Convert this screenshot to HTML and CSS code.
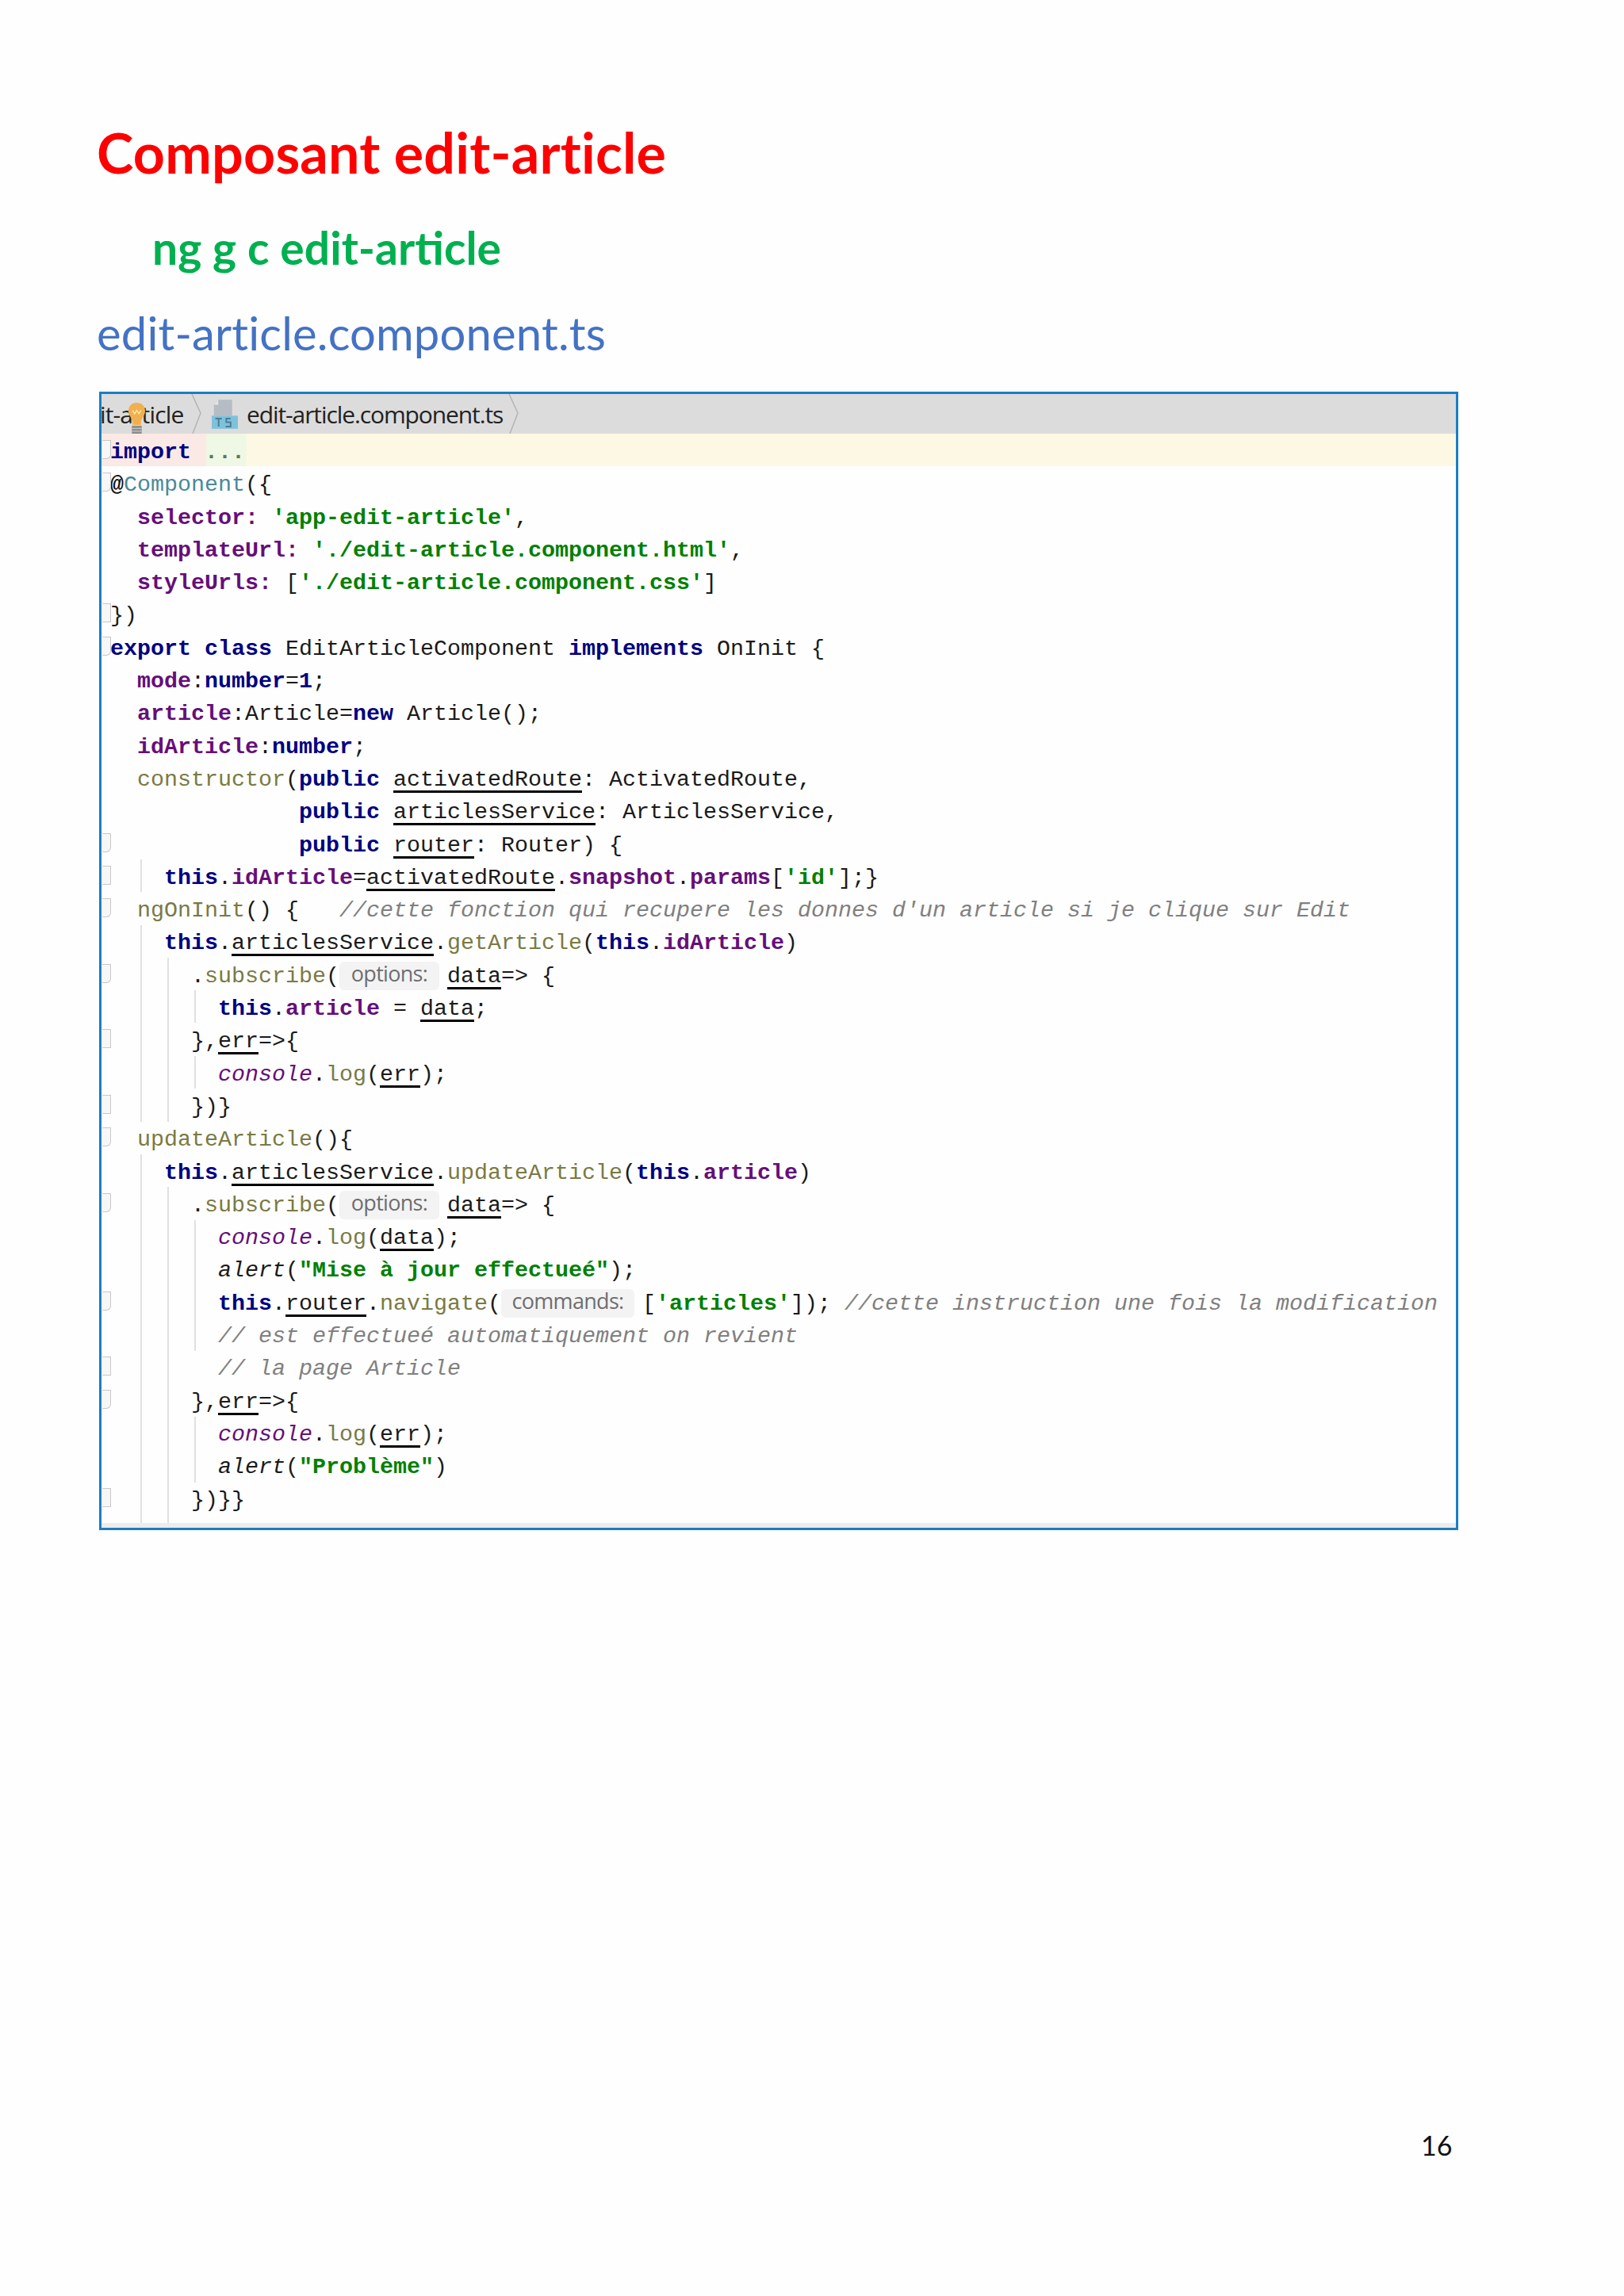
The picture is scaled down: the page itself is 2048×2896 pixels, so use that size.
FILE: index.html
```html
<!DOCTYPE html>
<html lang="fr">
<head>
<meta charset="utf-8">
<title>Composant edit-article</title>
<link rel="stylesheet" href="styles.css">
</head>
<body>
<main class="page">
  <h1 class="title">Composant edit-article</h1>
  <h2 class="command">ng g c edit-article</h2>
  <h3 class="file">edit-article.component.ts</h3>
  <section class="editor">
    <div class="crumbs">
      <span class="crumb-cut">it-article</span>
      <svg class="chev" viewBox="0 0 14 50"><path d="M1 0 L12 24 L2 50" fill="none" stroke="#b4b4b4" stroke-width="1.5"/></svg>
      <svg class="ts" viewBox="0 0 36 40">
        <path d="M9 0H28V22H3V7Z" fill="#b5bcc4"/><path d="M9 0V7H3Z" fill="#e4e4e4"/>
        <rect x="0" y="22" width="36" height="18" fill="#7fc1dc"/>
        <path d="M5 26H14M9.500 26V37M26 26H20V31H26V37H19" fill="none" stroke="#4c7f92" stroke-width="2.200"/>
      </svg>
      <span class="crumb">edit-article.component.ts</span>
      <svg class="chev" viewBox="0 0 14 50"><path d="M1 0 L12 24 L2 50" fill="none" stroke="#b4b4b4" stroke-width="1.5"/></svg>
      <svg class="bulb" viewBox="0 0 26 50">
        <path d="M13 1C5 1 1 7 1 13C1 20 7 23 7 30V33H19V30C19 23 25 20 25 13C25 7 21 1 13 1Z" fill="#f0b050"/>
        <path d="M7 12L10 17L13 12L16 17L19 12" fill="none" stroke="#ffe9a8" stroke-width="1.500"/>
        <path d="M6 34H20V46H17L15 49H11L9 46H6Z" fill="#8c8c8c"/>
        <path d="M6 38H20M6 42H20" stroke="#c4c4c4" stroke-width="1.500"/>
      </svg>
    </div>
    <div class="code">
<div class="line hl"><i class="fold fold-open"></i><b class="kw">import</b> <span class="dots">...</span></div>
<div class="line"><i class="fold fold-open"></i><span class="plain">@</span><span class="deco">Component</span>({</div>
<div class="line">  <b class="mem">selector:</b> <b class="str">'app-edit-article'</b>,</div>
<div class="line">  <b class="mem">templateUrl:</b> <b class="str">'./edit-article.component.html'</b>,</div>
<div class="line">  <b class="mem">styleUrls:</b> [<b class="str">'./edit-article.component.css'</b>]</div>
<div class="line"><i class="fold"></i>})</div>
<div class="line"><i class="fold fold-open"></i><b class="kw">export class</b> EditArticleComponent <b class="kw">implements</b> OnInit {</div>
<div class="line">  <b class="mem">mode</b>:<b class="kw">number</b>=<b class="kw">1</b>;</div>
<div class="line">  <b class="mem">article</b>:Article=<b class="kw">new</b> Article();</div>
<div class="line">  <b class="mem">idArticle</b>:<b class="kw">number</b>;</div>
<div class="line">  <span class="fn">constructor</span>(<b class="kw">public</b> <u>activatedRoute</u>: ActivatedRoute,</div>
<div class="line">              <b class="kw">public</b> <u>articlesService</u>: ArticlesService,</div>
<div class="line"><i class="fold fold-open"></i>              <b class="kw">public</b> <u>router</u>: Router) {</div>
<div class="line"><i class="fold"></i>    <b class="kw">this</b>.<b class="mem">idArticle</b>=<u>activatedRoute</u>.<b class="mem">snapshot</b>.<b class="mem">params</b>[<b class="str">'id'</b>];}</div>
<div class="line"><i class="fold fold-open"></i>  <span class="fn">ngOnInit</span>() {   <em class="cm">//cette fonction qui recupere les donnes d'un article si je clique sur Edit</em></div>
<div class="line">    <b class="kw">this</b>.<u class="mem-u">articlesService</u>.<span class="fn">getArticle</span>(<b class="kw">this</b>.<b class="mem">idArticle</b>)</div>
<div class="line"><i class="fold fold-open"></i>      .<span class="fn">subscribe</span>(<span class="chip chip-options">options:</span><u>data</u>=&gt; {</div>
<div class="line">        <b class="kw">this</b>.<b class="mem">article</b> = <u>data</u>;</div>
<div class="line"><i class="fold"></i>      },<u>err</u>=&gt;{</div>
<div class="line">        <em class="con">console</em>.<span class="fn">log</span>(<u>err</u>);</div>
<div class="line"><i class="fold"></i>      })}</div>
<div class="line"><i class="fold fold-open"></i>  <span class="fn">updateArticle</span>(){</div>
<div class="line">    <b class="kw">this</b>.<u class="mem-u">articlesService</u>.<span class="fn">updateArticle</span>(<b class="kw">this</b>.<b class="mem">article</b>)</div>
<div class="line"><i class="fold fold-open"></i>      .<span class="fn">subscribe</span>(<span class="chip chip-options">options:</span><u>data</u>=&gt; {</div>
<div class="line">        <em class="con">console</em>.<span class="fn">log</span>(<u>data</u>);</div>
<div class="line">        <em class="alert">alert</em>(<b class="str">"Mise à jour effectueé"</b>);</div>
<div class="line"><i class="fold fold-open"></i>        <b class="kw">this</b>.<u class="mem-u">router</u>.<span class="fn">navigate</span>(<span class="chip chip-commands">commands:</span>[<b class="str">'articles'</b>]); <em class="cm">//cette instruction une fois la modification</em></div>
<div class="line">        <em class="cm">// est effectueé automatiquement on revient</em></div>
<div class="line"><i class="fold"></i>        <em class="cm">// la page Article</em></div>
<div class="line"><i class="fold fold-open"></i>      },<u>err</u>=&gt;{</div>
<div class="line">        <em class="con">console</em>.<span class="fn">log</span>(<u>err</u>);</div>
<div class="line">        <em class="alert">alert</em>(<b class="str">"Problème"</b>)</div>
<div class="line"><i class="fold"></i>      })}}</div>
      <span class="guide g1 r13"></span>
      <span class="guide g1 r15"></span>
      <span class="guide g2 r16"></span>
      <span class="guide g3 r17"></span>
      <span class="guide g3 r19"></span>
      <span class="guide g1 r22"></span>
      <span class="guide g2 r23"></span>
      <span class="guide g3 r24"></span>
      <span class="guide g3 r30"></span>
    </div>
    <div class="strip"></div>
  </section>
  <footer class="pagenum">16</footer>
</main>
</body>
</html>
```
FILE: styles.css
```css
* { box-sizing: border-box; }
html, body { margin: 0; padding: 0; }
body { background: #fefefe; width: 2048px; height: 2896px; overflow: hidden; }
.page { padding: 150px 0 0 122px; display: flex; flex-direction: column; align-items: flex-start; height: 2896px; }
.title, .command, .file { margin: 0; font-family: Lato, "Open Sans", sans-serif; }
.title { color: #fe0000; font-weight: 700; font-size: 70px; line-height: 84px; letter-spacing: 0.2px; }
.command { color: #00b050; font-weight: 700; font-size: 57px; line-height: 68px; margin: 44px 0 0 70px; }
.file { color: #4472c4; font-weight: 400; font-size: 58px; line-height: 68px; margin-top: 40px; letter-spacing: 0.15px; }
.editor { margin: 40px 0 0 3px; width: 1714px; height: 1436px; border: 3px solid #1b7ec2; background: #fefefe; overflow: hidden; display: flex; flex-direction: column; }
.crumbs { position: relative; height: 50px; flex: none; background: #dcdcdc; display: flex; align-items: center; font-family: "Open Sans", sans-serif; font-size: 30px; color: #222; letter-spacing: -0.85px; }
.crumb-cut { margin-left: -2px; width: 115px; white-space: nowrap; overflow: hidden; }
.chev { width: 14px; height: 50px; flex: none; }
.ts { width: 33px; height: 37px; margin: 0 11px 0 12px; flex: none; }
.crumb { width: 324px; margin-right: 6px; letter-spacing: -1.1px; white-space: nowrap; }
.bulb { position: absolute; left: 32px; top: 10px; width: 25px; height: 44px; }
.code { position: relative; flex: 1; font-family: "Liberation Mono", monospace; font-size: 28.33px; color: #1a1a1a; }
.line { position: relative; height: 41.3px; line-height: 41.3px; padding: 3px 0 0 11px; white-space: pre; }
.hl { background: linear-gradient(to right, #fbe9e5 132px, #eff8e4 132px, #eff8e4 183px, #fdf8e4 183px); }
.dots { color: #5a7a5a; font-weight: 700; }
.kw { color: #000080; font-weight: 700; }
.mem, .mem-u { color: #660e7a; font-weight: 700; }
.str { color: #008000; font-weight: 700; }
.cm { color: #808080; font-style: italic; }
.con { color: #660e7a; font-style: italic; }
.alert { color: #1a1a1a; font-style: italic; }
.fn { color: #7a7a43; }
.deco { color: #4a8a9a; }
.plain { color: #111; font-weight: 700; }
u { text-decoration: underline; text-decoration-thickness: 2.5px; text-underline-offset: 6px; text-decoration-skip-ink: none; text-decoration-color: #000; }
.mem-u { color: #1a1a1a; font-weight: 400; }
.chip { display: inline-block; height: 36px; line-height: 30px; vertical-align: 1px; background: #f3f3f3; color: #6e6e6e; border-radius: 6px; font-family: "Open Sans", sans-serif; font-size: 27px; letter-spacing: -0.7px; text-align: center; }
.chip-options { width: 126px; margin-right: 10px; }
.chip-commands { width: 168px; margin-right: 10px; }
.fold { position: absolute; left: 1px; top: 8px; width: 11px; height: 24px; border: 1.5px solid #c8c8c8; border-left: none; background: #f7f7f7; }
.fold-open { border-radius: 0 0 6px 0; }
.guide { position: absolute; width: 1.500px; background: #e0e0e0; }
.g1 { left: 49px; }
.g2 { left: 83px; }
.g3 { left: 117px; }
.r13 { top: 537px; height: 41px; }
.r15 { top: 620px; height: 248px; }
.r16 { top: 661px; height: 207px; }
.r17 { top: 702px; height: 41px; }
.r19 { top: 785px; height: 41px; }
.r22 { top: 909px; height: 465px; }
.r23 { top: 950px; height: 424px; }
.r24 { top: 992px; height: 165px; }
.r30 { top: 1240px; height: 83px; }
.strip { height: 6px; flex: none; background: #ececec; }
.pagenum { position: absolute; left: 1792px; top: 2684px; font-family: Lato, sans-serif; font-size: 34px; line-height: 44px; color: #111; }
```
